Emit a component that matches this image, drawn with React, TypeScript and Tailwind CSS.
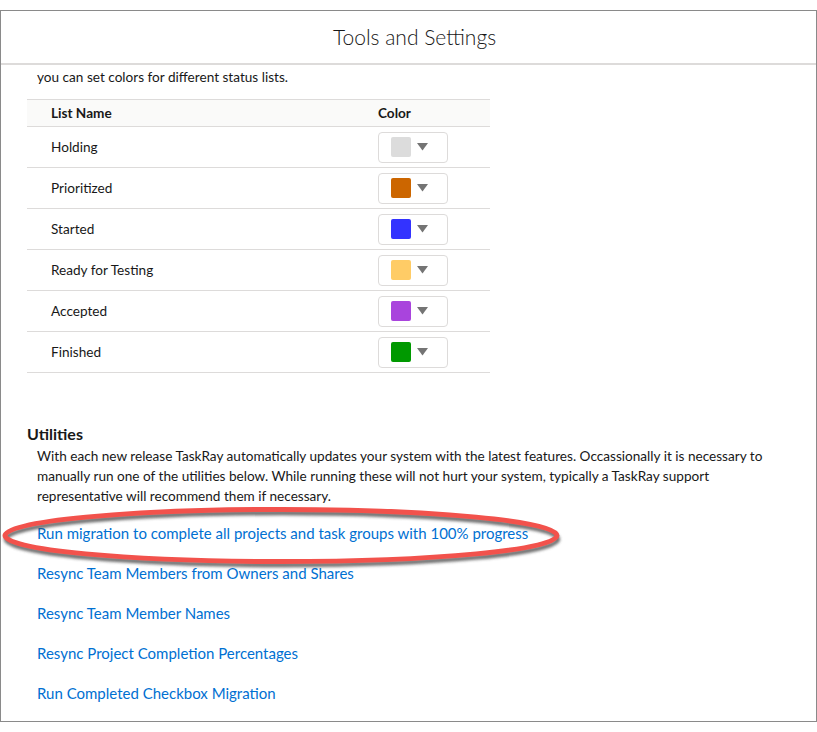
import React from "react";

const rows: { name: string; color: string }[] = [
  { name: "Holding", color: "#dcdcdc" },
  { name: "Prioritized", color: "#cc6600" },
  { name: "Started", color: "#3333ff" },
  { name: "Ready for Testing", color: "#ffcc66" },
  { name: "Accepted", color: "#a944dd" },
  { name: "Finished", color: "#009900" },
];

const links = [
  "Run migration to complete all projects and task groups with 100% progress",
  "Resync Team Members from Owners and Shares",
  "Resync Team Member Names",
  "Resync Project Completion Percentages",
  "Run Completed Checkbox Migration",
];

function ColorPicker({ color }: { color: string }) {
  return (
    <div className="flex items-center w-[70px] h-[31px] border border-[#dddbda] rounded-[4px] bg-white pl-[12px] gap-[6px]">
      <div className="w-[20px] h-[20px] rounded-[2px]" style={{ backgroundColor: color }} />
      <svg width="11" height="8" viewBox="0 0 11 8">
        <polygon points="0,0 11,0 5.5,7.5" fill="#747474" />
      </svg>
    </div>
  );
}

export default function App() {
  return (
    <div
      className="w-[817px] h-[732px] bg-white pt-[10px] text-[#181818]"
      style={{ fontFamily: "Lato, 'Noto Sans', sans-serif" }}
    >
      <div className="relative h-[712px] border border-[#8a8a8a] bg-white">
        <div className="h-[54px] flex items-center justify-center pl-[12px] border-b-2 border-[#dddbda] text-[21px] font-light text-[#181818]">
          Tools and Settings
        </div>
        <div className="pl-[36px] pt-[3px] text-[13.6px] leading-[18px]">you can set colors for different status lists.</div>

        <div className="ml-[26px] w-[463px] mt-[13px]">
          <div className="grid grid-cols-[351px_1fr] items-center h-[28px] border-y border-[#dddbda] bg-[#fafaf9] text-[13.6px] font-bold">
            <div className="pl-[24px]">List Name</div>
            <div>Color</div>
          </div>
          {rows.map((r) => (
            <div
              key={r.name}
              className="grid grid-cols-[351px_1fr] items-center h-[41px] border-b border-[#dddbda] text-[13.6px]"
            >
              <div className="pl-[24px]">{r.name}</div>
              <ColorPicker color={r.color} />
            </div>
          ))}
        </div>

        <div className="ml-[26px] mt-[51px] text-[16px] leading-[20px] font-bold">Utilities</div>
        <div className="ml-[36px] mt-[2px] w-[745px] text-[13.6px] leading-[20px]">
          With each new release TaskRay automatically updates your system with the latest features. Occassionally it is necessary to manually run one of the utilities below. While running these will not hurt your system, typically a TaskRay support representative will recommend them if necessary.
        </div>
        <div className="ml-[36px] mt-[17px] flex flex-col gap-[20px] text-[15px] leading-[20px] text-[#0070d2]">
          {links.map((l) => (
            <a key={l} href="#" className="w-fit">
              {l}
            </a>
          ))}
        </div>

        <svg
          className="absolute left-0 top-[488px] pointer-events-none"
          width="575"
          height="76"
          viewBox="0 0 575 76"
        >
          <defs>
            <filter id="sh" x="-10%" y="-40%" width="120%" height="180%">
              <feGaussianBlur stdDeviation="1.6" />
            </filter>
          </defs>
          <ellipse cx="281" cy="40" rx="276" ry="26" fill="none" stroke="#444" strokeWidth="4.5" filter="url(#sh)" opacity="0.8" />
          <ellipse cx="280" cy="36.5" rx="276" ry="26" fill="none" stroke="#f2524c" strokeWidth="5" />
        </svg>
      </div>
    </div>
  );
}
